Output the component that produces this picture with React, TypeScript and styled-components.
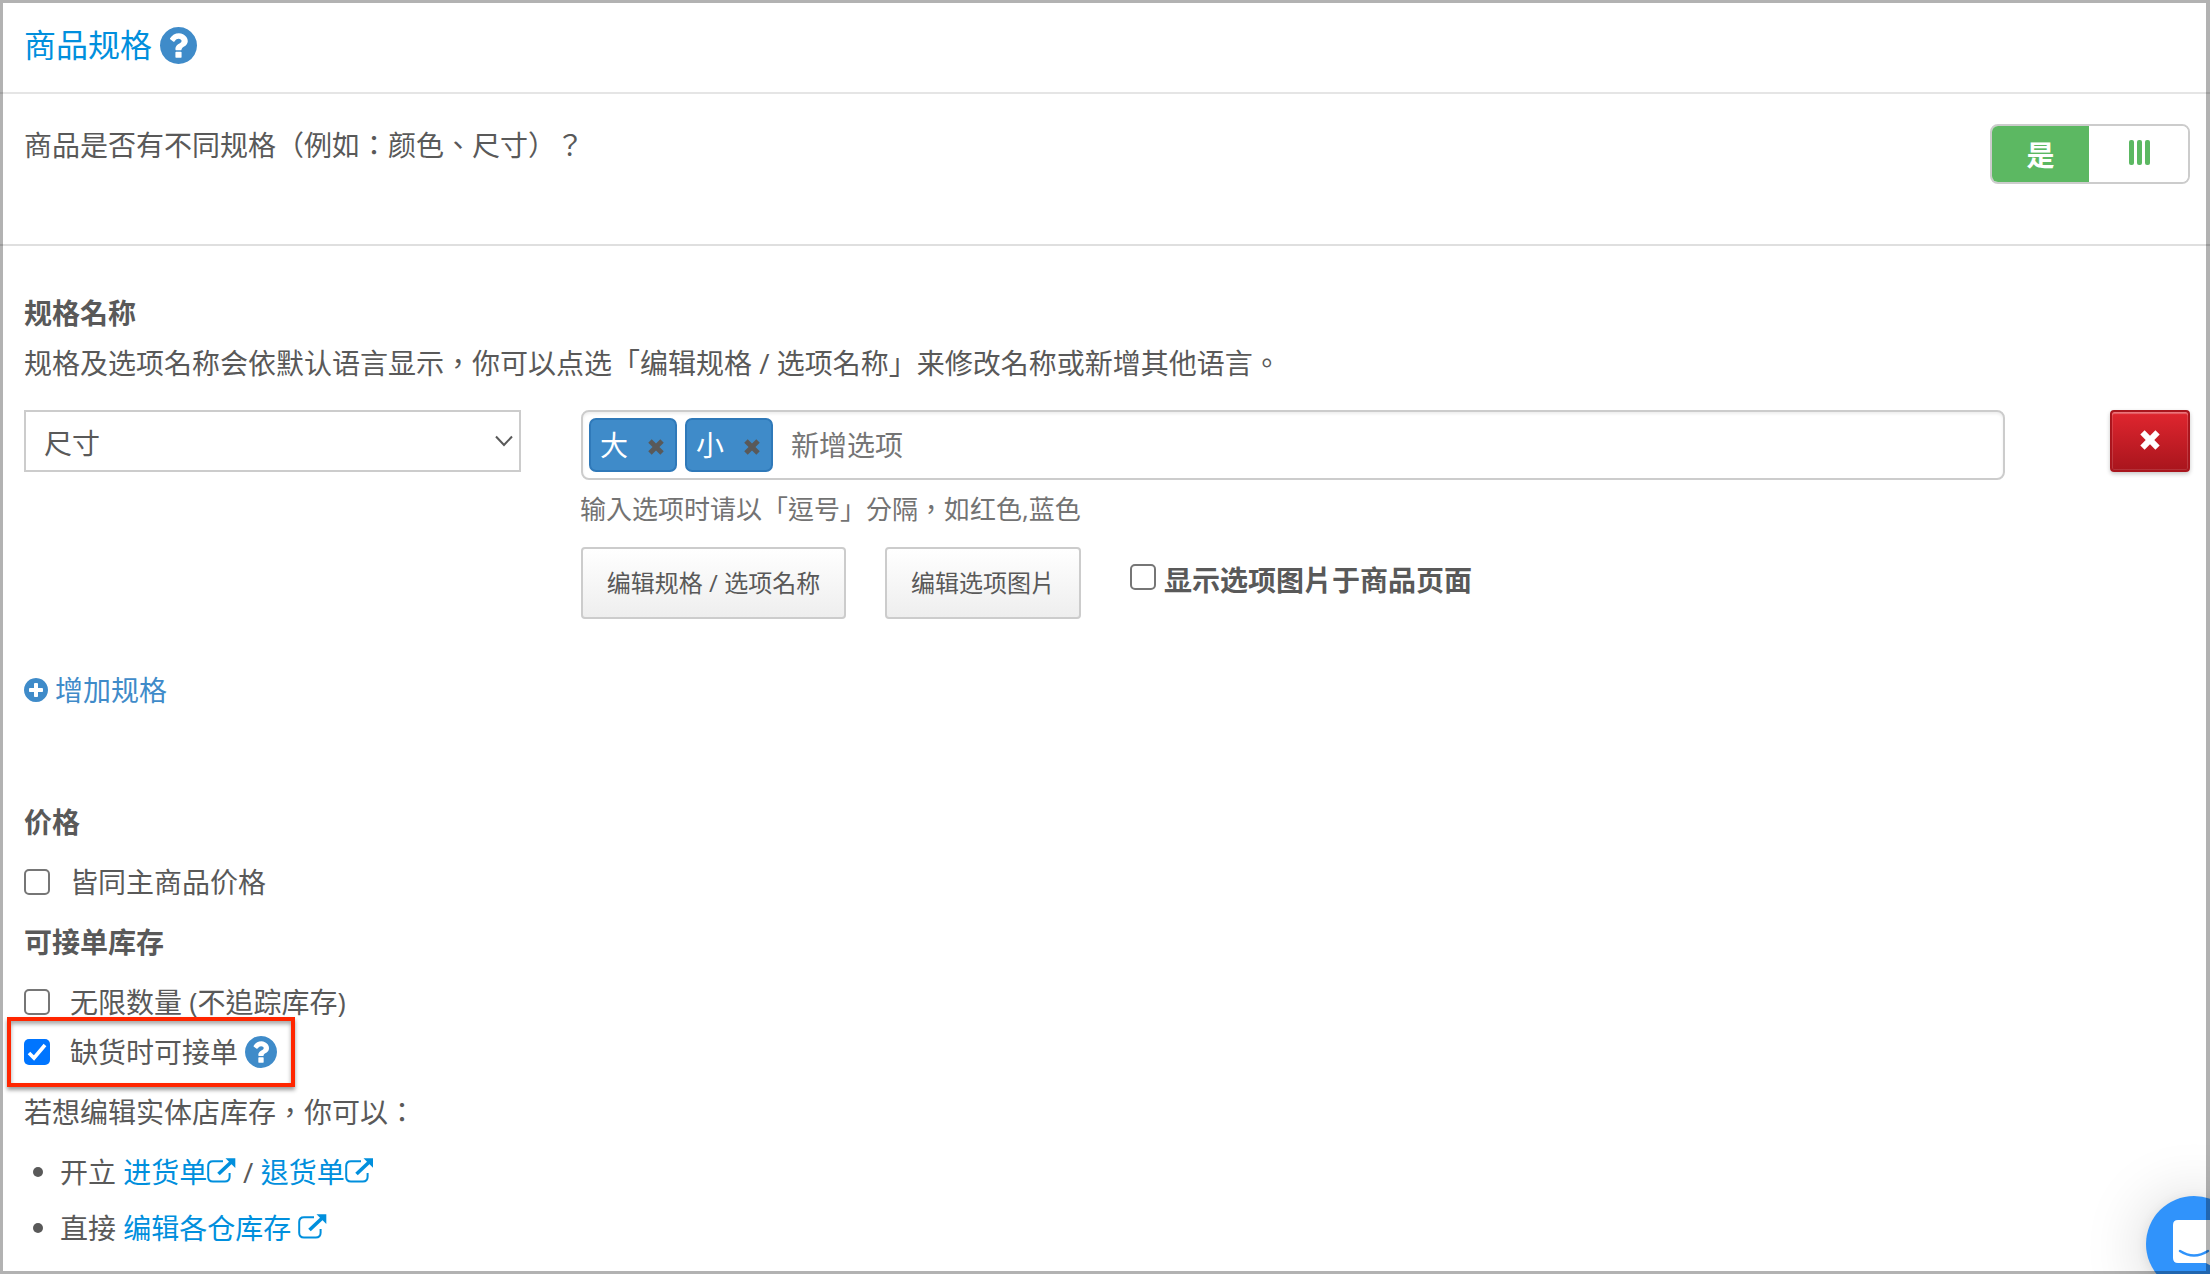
import React from "react";
import styled, { createGlobalStyle, css } from "styled-components";

const Global = createGlobalStyle`
  *, *::before, *::after { box-sizing: border-box; }
  body { margin: 0; background: #fff; }
  body, button, input, select {
    font-family: "Open Sans", "Noto Sans CJK TC", "Noto Sans CJK SC", sans-serif;
    font-size: 28px;
    line-height: 40px;
    color: #595959;
  }
`;

const Frame = styled.div`
  position: relative;
  width: 2210px;
  height: 1274px;
  overflow: hidden;
  background: #fff;
  &::after {
    content: "";
    position: absolute;
    inset: 0;
    border: 3px solid rgba(0, 0, 0, 0.3);
    border-right-width: 4px;
    pointer-events: none;
  }
`;

const Header = styled.header`
  display: flex;
  align-items: center;
  gap: 8px;
  height: 94px;
  padding: 0 24px 2px;
  border-bottom: 2px solid #e5e5e5;
`;

const Title = styled.h1`
  margin: 0;
  font-size: 32px;
  font-weight: 400;
  line-height: 44px;
  color: #008fdd;
`;

const Question = styled.section`
  display: flex;
  justify-content: space-between;
  align-items: flex-start;
  height: 152px;
  padding: 30px 20px 0 24px;
  border-bottom: 2px solid #dfdfdf;
`;

const Text = styled.p<{ $top: number }>`
  margin: ${(p) => p.$top}px 0 0;
  line-height: 40px;
`;

const Toggle = styled.div`
  display: flex;
  width: 200px;
  height: 60px;
  border: 2px solid #ccc;
  border-radius: 8px;
  overflow: hidden;
`;

const ToggleSide = styled.div<{ $on?: boolean }>`
  display: flex;
  align-items: center;
  justify-content: center;
  width: ${(p) => (p.$on ? 97 : 99)}px;
  padding-top: ${(p) => (p.$on ? 2 : 0)}px;
  font-weight: 700;
  background: ${(p) => (p.$on ? "#5cb862" : "#fff")};
  color: #fff;
`;

const Grip = styled.div`
  display: flex;
  gap: 3px;
  margin: -4px 0 0 1px;
`;

const GripBar = styled.span`
  width: 5px;
  height: 25px;
  border-radius: 2px;
  background: #5cb862;
`;

const Body = styled.main`
  display: flex;
  flex-direction: column;
  padding: 47px 20px 0 24px;
`;

const Heading = styled.h2<{ $top?: number }>`
  margin: ${(p) => p.$top || 0}px 0 0;
  font-size: 28px;
  font-weight: 700;
  line-height: 40px;
`;

const SpecRow = styled.div`
  display: flex;
  justify-content: space-between;
  align-items: flex-start;
  margin-top: 27px;
`;

const Remove = styled.button`
  display: flex;
  align-items: center;
  justify-content: center;
  width: 80px;
  height: 62px;
  padding: 0 0 2px;
  border: 2px solid #a9151d;
  border-radius: 4px;
  background: linear-gradient(#e0262f, #a9151d);
  box-shadow: inset 0 2px 1px rgba(255, 255, 255, 0.28), inset 0 0 0 1px rgba(255, 255, 255, 0.12),
    0 2px 4px rgba(0, 0, 0, 0.22);
`;

const Select = styled.div`
  display: flex;
  align-items: center;
  justify-content: space-between;
  width: 497px;
  height: 62px;
  padding: 4px 6px 0 18px;
  border: 2px solid #ccc;
  svg { margin-top: -4px; }
`;

const Options = styled.div`
  display: flex;
  flex-direction: column;
  margin-right: 45px;
`;

const TagField = styled.div`
  display: flex;
  align-items: flex-start;
  gap: 8px;
  width: 1424px;
  height: 70px;
  padding: 6px;
  border: 2px solid #ccc;
  border-radius: 8px;
  box-shadow: inset 0 2px 3px rgba(0, 0, 0, 0.07);
`;

const Tag = styled.span`
  display: flex;
  align-items: center;
  justify-content: space-between;
  width: 88px;
  height: 54px;
  padding: 0 11px 0 9px;
  border: 2px solid #2f79b9;
  border-radius: 7px;
  background: #3f8bc9;
  color: #fff;
  svg { margin-top: 3px; }
`;

const Placeholder = styled.span`
  margin-left: 10px;
  line-height: 54px;
  color: #757575;
`;

const Hint = styled.p`
  margin: 11px 0 0 -1px;
  font-size: 26px;
  line-height: 37px;
  color: #737373;
`;

const Actions = styled.div`
  display: flex;
  align-items: flex-start;
  margin-top: 19px;
`;

const Button = styled.button<{ $width: number }>`
  width: ${(p) => p.$width}px;
  height: 72px;
  margin-right: 39px;
  padding: 0;
  border: 2px solid #ccc;
  border-radius: 4px;
  background: linear-gradient(#fff, #eee);
  font-size: 24px;
  white-space: nowrap;
`;

const checkedBox = css`
  border: 0;
  background: #0075ff;
`;

const Box = styled.span<{ $checked?: boolean }>`
  display: flex;
  flex: none;
  width: 26px;
  height: 26px;
  border: 2px solid #767676;
  border-radius: 5px;
  background: #fff;
  ${(p) => p.$checked && checkedBox}
`;

const ShowImages = styled.label`
  display: flex;
  align-items: flex-start;
  gap: 8px;
  margin: 13px 0 0 10px;
  font-weight: 700;
  ${Box} { margin-top: 4px; }
`;

const AddLink = styled.a`
  display: flex;
  align-items: center;
  gap: 7px;
  margin-top: 51px;
  color: #3f8bc9;
`;

const CheckRow = styled.label<{ $top: number }>`
  display: flex;
  align-items: center;
  gap: 20px;
  height: 40px;
  margin-top: ${(p) => p.$top}px;
`;

const Labelled = styled.span`
  display: flex;
  align-items: center;
  gap: 7px;
`;

const Highlight = styled.div`
  display: flex;
  width: 288px;
  height: 70px;
  margin: -5px 0 0 -17px;
  padding: 11px 0 0 13px;
  border: 4px solid #ff2600;
  box-shadow: 0 3px 4px rgba(0, 0, 0, 0.4), inset 0 3px 4px rgba(0, 0, 0, 0.35);
`;

const List = styled.ul`
  display: flex;
  flex-direction: column;
  gap: 16px;
  margin: 20px 0 0;
  padding: 0;
  list-style: none;
`;

const Item = styled.li`
  display: flex;
  align-items: center;
  height: 40px;
  padding-left: 9px;
  white-space: pre;
  &::before {
    content: "";
    width: 10px;
    height: 10px;
    margin-right: 17px;
    border-radius: 50%;
    background: #595959;
  }
`;

const Link = styled.a<{ $gap?: number }>`
  display: flex;
  align-items: center;
  gap: ${(p) => p.$gap || 0}px;
  color: #008fdd;
  svg { margin-top: -3px; }
`;

const Chat = styled.div`
  position: absolute;
  left: 2146px;
  top: 1196px;
  width: 96px;
  height: 96px;
  border-radius: 50%;
  background: #3093fb;
  box-shadow: 0 2px 12px rgba(0, 0, 0, 0.08), 0 4px 64px rgba(0, 0, 0, 0.18);
`;

const circle =
  "M1664 896q0 209-103 385.5t-279.5 279.5-385.5 103-385.5-103-279.5-279.5-103-385.5 103-385.5 279.5-279.5 385.5-103 385.5 103 279.5 279.5 103 385.5z";

const QuestionIcon = ({ size }: { size: number }) => (
  <svg width={size} height={size} viewBox="128 128 1536 1536" fill="#3f8bc9">
    <path
      fillRule="evenodd"
      d={
        "M1024 1376v-192q0-14-9-23t-23-9h-192q-14 0-23 9t-9 23v192q0 14 9 23t23 9h192q14 0 23-9t9-23zm256-672q0-88-55.5-163t-138.5-116-170-41q-243 0-371 213-15 24 8 42l132 100q7 6 19 6 16 0 25-12 53-68 86-92 34-24 86-24 48 0 85.5 26t37.5 59q0 38-20 61t-68 45q-63 28-115.5 86.5t-52.5 125.5v36q0 14 9 23t23 9h192q14 0 23-9t9-23q0-19 21.5-49.5t54.5-49.5q32-18 49-28.5t46-35 44.5-48 28-60.5 12.5-81z" +
        circle
      }
      stroke="none"
    />
  </svg>
);

const PlusIcon = () => (
  <svg width="24" height="24" viewBox="128 128 1536 1536" fill="#3f8bc9">
    <path
      fillRule="evenodd"
      d={
        "M1344 960v-128q0-26-19-45t-45-19h-256v-256q0-26-19-45t-45-19h-128q-26 0-45 19t-19 45v256h-256q-26 0-45 19t-19 45v128q0 26 19 45t45 19h256v256q0 26 19 45t45 19h128q26 0 45-19t19-45v-256h256q26 0 45-19t19-45z" +
        circle
      }
    />
  </svg>
);

const CrossIcon = ({ size, color }: { size: number; color: string }) => (
  <svg width={size} height={size} viewBox="0 0 20 20" fill={color}>
    <path d="M4.6 0.3L10 5.7L15.4 0.3L19.7 4.6L14.3 10L19.7 15.4L15.4 19.7L10 14.3L4.6 19.7L0.3 15.4L5.7 10L0.3 4.6Z" />
  </svg>
);

const ExternalIcon = () => (
  <svg width="28.5" height="25" viewBox="0 0 28.5 25" fill="none" stroke="#008fdd">
    <path d="M16 3.2H6Q1.2 3.2 1.2 8V18.8Q1.2 23.6 6 23.6H17.8Q22.6 23.6 22.6 18.8V15" strokeWidth="2" />
    <path d="M11.5 16L24 4.2" strokeWidth="3.6" />
    <path d="M18.5 0.2H28.3V10Z" fill="#008fdd" stroke="none" />
  </svg>
);

export default function App() {
  return (
    <>
      <Global />
      <Frame>
        <Header>
          <Title>商品规格</Title>
          <QuestionIcon size={37} />
        </Header>
        <Question>
          <Text $top={1}>商品是否有不同规格（例如：颜色、尺寸）？</Text>
          <Toggle>
            <ToggleSide $on>是</ToggleSide>
            <ToggleSide>
              <Grip>
                <GripBar />
                <GripBar />
                <GripBar />
              </Grip>
            </ToggleSide>
          </Toggle>
        </Question>
        <Body>
          <Heading>规格名称</Heading>
          <Text $top={10}>规格及选项名称会依默认语言显示，你可以点选「编辑规格 / 选项名称」来修改名称或新增其他语言。</Text>
          <SpecRow>
            <Select>
              尺寸
              <svg width="18" height="12" viewBox="0 0 18 12" fill="none" stroke="#595959" strokeWidth="2">
                <path d="M1 1.5L9 10L17 1.5" />
              </svg>
            </Select>
            <Options>
              <TagField>
                <Tag>
                  大<CrossIcon size={16} color="#595959" />
                </Tag>
                <Tag>
                  小<CrossIcon size={16} color="#595959" />
                </Tag>
                <Placeholder>新增选项</Placeholder>
              </TagField>
              <Hint>输入选项时请以「逗号」分隔，如红色,蓝色</Hint>
              <Actions>
                <Button $width={265}>编辑规格 / 选项名称</Button>
                <Button $width={196}>编辑选项图片</Button>
                <ShowImages>
                  <Box />
                  显示选项图片于商品页面
                </ShowImages>
              </Actions>
            </Options>
            <Remove>
              <CrossIcon size={20} color="#fff" />
            </Remove>
          </SpecRow>
          <AddLink>
            <PlusIcon />
            增加规格
          </AddLink>
          <Heading $top={92}>价格</Heading>
          <CheckRow $top={20}>
            <Box />
            皆同主商品价格
          </CheckRow>
          <Heading $top={20}>可接单库存</Heading>
          <CheckRow $top={20}>
            <Box />
            无限数量 (不追踪库存)
          </CheckRow>
          <Highlight>
            <CheckRow $top={0}>
              <Box $checked>
                <svg width="26" height="26" viewBox="0 0 26 26" fill="none" stroke="#fff" strokeWidth="3.6">
                  <path d="M5 14L10 19L21 6" />
                </svg>
              </Box>
              <Labelled>
                缺货时可接单
                <QuestionIcon size={32} />
              </Labelled>
            </CheckRow>
          </Highlight>
          <Text $top={5}>若想编辑实体店库存，你可以：</Text>
          <List>
            <Item>
              {"开立 "}
              <Link>
                进货单
                <ExternalIcon />
              </Link>
              {" / "}
              <Link>
                退货单
                <ExternalIcon />
              </Link>
            </Item>
            <Item>
              {"直接 "}
              <Link $gap={7}>
                编辑各仓库存
                <ExternalIcon />
              </Link>
            </Item>
          </List>
        </Body>
        <Chat>
          <svg width="96" height="96" viewBox="0 0 96 96">
            <path d="M32 24H64Q69 24 69 29V72L60 67H32Q27 67 27 62V29Q27 24 32 24Z" fill="#fff" />
            <path d="M34 55Q48 64 62 55" fill="none" stroke="#3093fb" strokeWidth="2.5" strokeLinecap="round" />
          </svg>
        </Chat>
      </Frame>
    </>
  );
}
